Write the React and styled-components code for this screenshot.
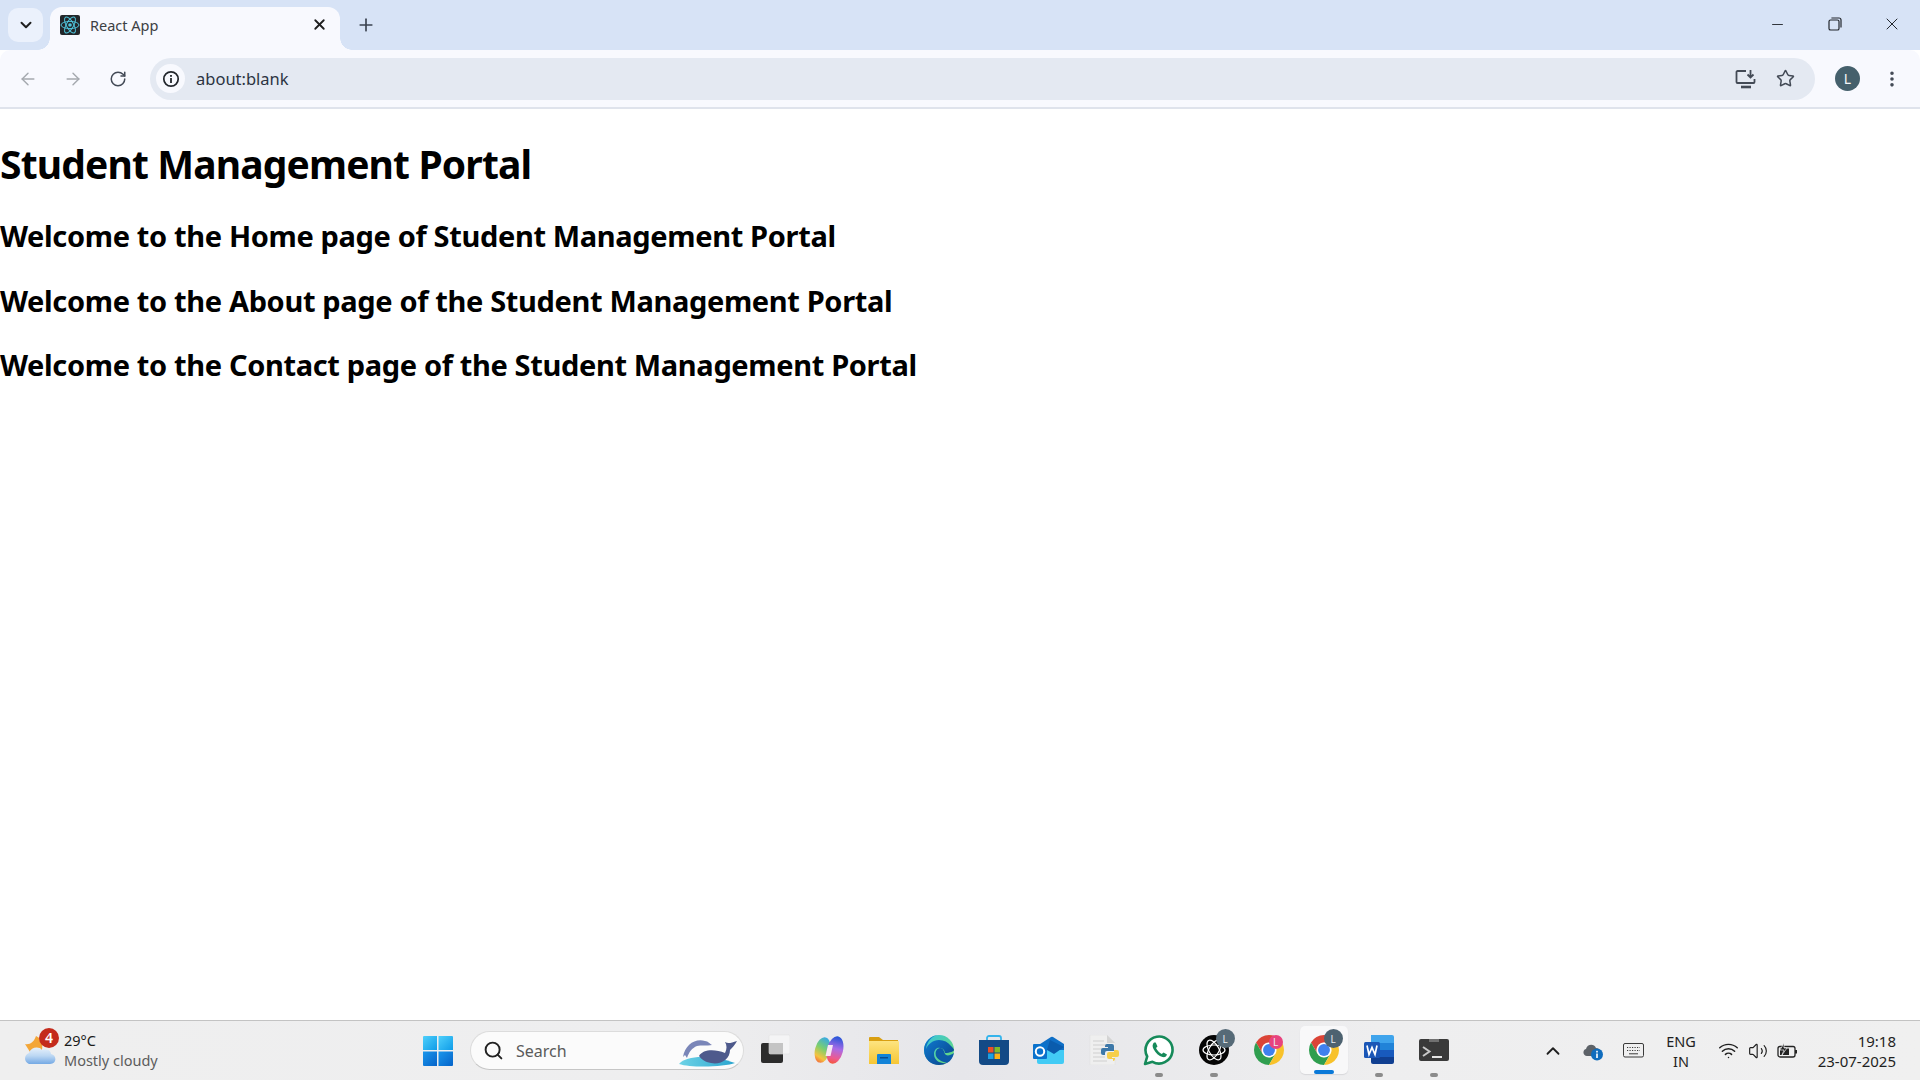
import React from "react";
import styled, { createGlobalStyle } from "styled-components";
import { ArrowLeft, ArrowRight, RotateCw, ChevronDown, ChevronUp, X, Plus, Minus, Star, EllipsisVertical, Search as SearchGlyph, Wifi, Volume2 } from "lucide-react";

const Global = createGlobalStyle`
  html, body { margin: 0; padding: 0; background: #fff; }
  body { font-family: "Noto Sans", "Open Sans", sans-serif; overflow: hidden; }
`;

const Screen = styled.div`
  width: 1920px; height: 1080px; display: flex; flex-direction: column; background: #fff;
`;
const TabStrip = styled.div`
  height: 50px; background: #d7e3f6; display: flex; align-items: flex-end; padding-left: 8px; flex: none;
`;
const TabListButton = styled.div`
  width: 35px; height: 34px; margin-bottom: 8px; border-radius: 10px; background: #ebf1fc; color: #1f1f1f;
  display: flex; align-items: center; justify-content: center;
`;
const Tab = styled.div`
  position: relative; width: 290px; height: 43px; margin-left: 7px; background: #f8f9fe;
  border-radius: 12px 12px 0 0; display: flex; align-items: center; padding: 0 10px 8px 10px; box-sizing: border-box;
  font-size: 14.5px; color: #3c4043;
  &::before, &::after {
    content: ""; position: absolute; bottom: 0; width: 12px; height: 12px;
  }
  &::before { left: -12px; background: radial-gradient(circle at 0 0, transparent 11.5px, #f8f9fe 12px); }
  &::after { right: -12px; background: radial-gradient(circle at 100% 0, transparent 11.5px, #f8f9fe 12px); }
`;
const TabTitle = styled.span`
  margin-left: 10px; flex: 1; white-space: nowrap;
`;
const CloseTab = styled.span`
  display: flex; color: #1f1f1f; margin-right: 2px;
`;
const NewTab = styled.div`
  display: flex; margin: 0 0 11px 12px; height: 28px; width: 28px; align-items: center; justify-content: center; color: #3b4350;
`;
const WindowControls = styled.div`
  margin-left: auto; display: flex; height: 50px; align-items: center; padding-bottom: 2px; box-sizing: border-box; color: #22262c;
`;
const WindowButton = styled.div`
  width: 57px; display: flex; justify-content: center; align-items: center;
`;
const Toolbar = styled.div`
  height: 57px; background: #f8f9fe; border-bottom: 2px solid #dfe3ec; border-radius: 10px 10px 0 0;
  display: flex; align-items: center; flex: none; box-sizing: content-box; color: #434a56;
`;
const NavButton = styled.div`
  width: 45px; display: flex; justify-content: center; align-items: center; color: ${p => (p.$off ? "#a5a9af" : "#434a56")};
`;
const NavGroup = styled.div`
  display: flex; padding-left: 5px; width: 150px; box-sizing: border-box; flex: none;
`;
const Omnibox = styled.div`
  width: 1665px; height: 42px; background: #e4e9f2; border-radius: 21px; display: flex; align-items: center;
  padding: 0 20px 0 6px; box-sizing: border-box; font-size: 16.5px; color: #2c3442; flex: none;
`;
const InfoChip = styled.div`
  width: 29px; height: 29px; border-radius: 50%; background: #f8f9fe; display: flex; align-items: center; justify-content: center; color: #22262c;
`;
const Url = styled.span`
  margin-left: 11px; flex: 1;
`;
const OmniActions = styled.div`
  display: flex; gap: 19px; align-items: center; color: #434a56;
`;
const ProfileArea = styled.div`
  flex: 1; display: flex; align-items: center; padding-left: 20px;
`;
const Avatar = styled.div`
  width: 25px; height: 25px; border-radius: 50%; background: #45606c; color: #f4f6f8; font-size: 14px;
  display: flex; align-items: center; justify-content: center;
`;
const Kebab = styled.div`
  display: flex; margin-left: 22px; color: #434a56;
`;
const Page = styled.main`
  flex: 1; overflow: hidden; color: #000; font-family: "Noto Sans", sans-serif;
`;
const Title = styled.h1`
  margin: 28px 0 0; font-size: 39px; line-height: 54px; font-weight: 700; letter-spacing: -0.85px;
`;
const Heading = styled.h2`
  margin: 25px 0 0; font-size: 29px; line-height: 39.5px; font-weight: 700; letter-spacing: -0.35px;
`;
const Taskbar = styled.footer`
  height: 60px; flex: none; box-sizing: border-box; border-top: 1px solid #c3c3c3;
  background: linear-gradient(90deg, #efefef 0%, #eeeeef 35%, #e6e6ea 50%, #eeeeef 72%, #f0f0f0 100%);
  display: flex; align-items: center; font-family: "Noto Sans", sans-serif;
`;
const Weather = styled.div`
  width: 423px; flex: none; display: flex; align-items: center; padding-left: 24px; box-sizing: border-box;
`;
const WeatherIcon = styled.div`
  position: relative; width: 36px; height: 36px; display: flex; flex: none;
`;
const Badge = styled.span`
  position: absolute; top: -5px; right: 1px; width: 20px; height: 20px; border-radius: 50%; background: #c42b1c; color: #fff;
  font-size: 14px; font-weight: 600; display: flex; align-items: center; justify-content: center; line-height: 1;
`;
const WeatherText = styled.div`
  margin: -2px 0 0 4px; font-size: 14.5px; line-height: 20px; color: #1b1b1b;
`;
const Muted = styled.div`
  color: #5c5c5c;
`;
const Start = styled.div`
  width: 30px; height: 30px; flex: none; display: flex;
`;
const SearchBox = styled.div`
  margin-left: 17px; width: 274px; height: 39px; box-sizing: border-box; border-radius: 20px; background: #fbfbfb;
  border: 1px solid #dcdcdc; border-bottom-color: #c6c6c6; display: flex; align-items: center; padding-left: 12px; flex: none;
  font-size: 16px; color: #5a5a5a; position: relative;
`;
const SearchLabel = styled.span`
  margin-left: 12px; flex: 1;
`;
const Dolphins = styled.div`
  display: flex; margin-right: 4px;
`;
const Apps = styled.div`
  display: flex; margin-left: 2px; height: 100%;
`;
const AppSlot = styled.div`
  position: relative; width: 55px; height: 100%; display: flex; align-items: center; justify-content: center; box-sizing: border-box; padding-bottom: 2px;
  ${p => p.$active && `
    background: #f8f8f9; border-radius: 5px; height: 48px; width: 48px; margin: 5px 3.5px; box-shadow: 0 1px 1px #d7d7da; padding-bottom: 0;
  `}
`;
const RunDot = styled.span`
  position: absolute; bottom: ${p => (p.$active ? "0" : "3px")}; left: 50%; transform: translateX(-50%);
  height: 4px; border-radius: 2px; width: ${p => (p.$active ? "20px" : "8px")}; background: ${p => (p.$active ? "#0a79d8" : "#8b8b8b")};
`;
const ProfileBadge = styled.span`
  position: absolute; top: ${p => p.$top}px; left: calc(50% + ${p => p.$dx}px); width: ${p => p.$size}px; height: ${p => p.$size}px; border-radius: 50%;
  background: ${p => p.$bg}; color: #e8edf0; font-size: 10px; display: flex; align-items: center; justify-content: center;
`;
const Tray = styled.div`
  margin-left: auto; display: flex; align-items: center; color: #1f1f1f; height: 100%;
`;
const TrayIcon = styled.div`
  display: flex; align-items: center; justify-content: center; width: ${p => p.$w || 40}px;
`;
const Lang = styled.div`
  width: 46px; margin: 0 9px 0 5px; text-align: center; font-size: 14.500px; line-height: 20px; color: #1f1f1f;
`;
const Clock = styled.div`
  width: 93px; margin-right: 24px; text-align: right; font-size: 15px; line-height: 20px; color: #1f1f1f; white-space: nowrap;
`;

const ReactFavicon = () => (
  <svg width="20" height="20" viewBox="0 0 20 20">
    <rect width="20" height="20" rx="2" fill="#23272a" />
    <g fill="none" stroke="#4fc3d9" strokeWidth="1">
      <ellipse cx="10" cy="10" rx="9" ry="3.6" />
      <ellipse cx="10" cy="10" rx="9" ry="3.6" transform="rotate(60 10 10)" />
      <ellipse cx="10" cy="10" rx="9" ry="3.6" transform="rotate(120 10 10)" />
    </g>
    <circle cx="10" cy="10" r="1.8" fill="#4fc3d9" />
  </svg>
);
const InfoIcon = () => (
  <svg width="18" height="18" viewBox="0 0 18 18" fill="none">
    <circle cx="9" cy="9" r="7.2" stroke="currentColor" strokeWidth="1.7" />
    <rect x="8.1" y="8" width="1.8" height="5" fill="currentColor" />
    <rect x="8.1" y="5" width="1.8" height="1.8" fill="currentColor" />
  </svg>
);
const RestoreIcon = () => (
  <svg width="14" height="14" viewBox="0 0 14 14" fill="none" stroke="#22262c" strokeWidth="1.2">
    <rect x="1" y="3" width="10" height="10" rx="1.6" />
    <path d="M3.4 1h7.6A2 2 0 0 1 13 3v7.6" />
  </svg>
);
const InstallIcon = () => (
  <svg width="22" height="20" viewBox="0 0 22 20" fill="none" stroke="currentColor" strokeWidth="1.8">
    <path d="M11 2H2.500A1 1 0 0 0 1.500 3v10a1 1 0 0 0 1 1h16a1 1 0 0 0 1-1v-3" />
    <path d="M6 18h10" strokeWidth="2.600" />
    <path d="M15.500 1v7M12.500 5.500l3 3 3-3" />
  </svg>
);
const WeatherArt = () => (
  <svg width="36" height="36" viewBox="0 0 36 36">
    <defs>
      <linearGradient id="cloudGrad" x1="0" y1="0" x2="0" y2="1"><stop offset="0" stopColor="#e6f0fb" /><stop offset="0.5" stopColor="#bcd7f3" /><stop offset="1" stopColor="#74a9e4" /></linearGradient>
    </defs>
    <path d="M1 11 C6 12 10 9 12 3 C17 5 19 10 18 17 L6 19 Z" fill="#f3a638" />
    <path d="M7 31 C0 31 -1 22 5 20 C7 14 15 13 18 17 C23 15 27 18 27 21 C33 22 33 31 26 31 Z" fill="url(#cloudGrad)" />
  </svg>
);
const WinLogo = () => (
  <svg width="30" height="30" viewBox="0 0 30 30">
    <defs>
      <linearGradient id="winA" x1="0" y1="0" x2="1" y2="1"><stop offset="0" stopColor="#4fd0fb" /><stop offset="1" stopColor="#0f9ce8" /></linearGradient>
      <linearGradient id="winB" x1="0" y1="0" x2="1" y2="1"><stop offset="0" stopColor="#1a97ec" /><stop offset="1" stopColor="#0563c9" /></linearGradient>
    </defs>
    <path d="M1 0H14V14H0V1a1 1 0 0 1 1-1z" fill="url(#winA)" />
    <path d="M15.500 0H29a1 1 0 0 1 1 1V14H15.500z" fill="url(#winA)" />
    <path d="M0 15.500H14V30H1a1 1 0 0 1-1-1z" fill="url(#winB)" />
    <path d="M15.500 15.500H30V29a1 1 0 0 1-1 1H15.500z" fill="url(#winB)" />
  </svg>
);
const DolphinArt = () => (
  <svg width="62" height="32" viewBox="0 0 62 32">
    <defs>
      <linearGradient id="seaGrad" x1="0" y1="0" x2="1" y2="0"><stop offset="0" stopColor="#6ed3e6" /><stop offset="1" stopColor="#2ba5cf" /></linearGradient>
    </defs>
    <path d="M2 29 C10 20 34 20 58 28 C48 32 14 33 2 29z" fill="url(#seaGrad)" />
    <path d="M6 22 C8 10 18 3 28 6 C31 6 33 9 35 10 C30 11 24 10 20 11 C15 13 12 17 10 23 L8 20z" fill="#7a86b8" />
    <path d="M22 21 C26 14 38 14 48 18 C50 14 50 10 48 7 C51 9 54 8 60 6 C58 10 55 13 53 15 C53 24 44 30 34 28 C28 27 24 24 22 21z" fill="#4e5a8c" />
  </svg>
);
const TaskViewIcon = () => (
  <svg width="32" height="32" viewBox="0 0 32 32">
    <rect x="3" y="9" width="22" height="20" rx="2" fill="#2c2c2c" />
    <rect x="11" y="1" width="21" height="19" rx="1.500" fill="#f6f6f6" fillOpacity="0.85" stroke="#e3e3e3" strokeWidth="0.600" />
    <rect x="11" y="9" width="14" height="11" fill="#c4c4c4" />
  </svg>
);
const CopilotIcon = () => (
  <svg width="32" height="30" viewBox="0 0 32 30">
    <defs>
      <linearGradient id="copA" x1="0.6" y1="0" x2="0.4" y2="1"><stop offset="0" stopColor="#35a8e8" /><stop offset="0.45" stopColor="#7ccf6e" /><stop offset="0.8" stopColor="#f6c340" /><stop offset="1" stopColor="#f2703c" /></linearGradient>
      <linearGradient id="copB" x1="0.5" y1="0" x2="0.5" y2="1"><stop offset="0" stopColor="#1f55d8" /><stop offset="0.45" stopColor="#a96be6" /><stop offset="0.8" stopColor="#ee5a8e" /><stop offset="1" stopColor="#f4573a" /></linearGradient>
    </defs>
    <ellipse cx="9.500" cy="15" rx="7.500" ry="13" transform="rotate(14 9.500 15)" fill="url(#copA)" />
    <ellipse cx="22" cy="15" rx="8" ry="14" transform="rotate(14 22 15)" fill="url(#copB)" />
    <path d="M15 10 L20 10 L17.500 21 L12.500 21 Z" fill="#f7e9f2" />
  </svg>
);
const FolderIcon = () => (
  <svg width="30" height="28" viewBox="0 0 30 28">
    <defs><linearGradient id="fold" x1="0" y1="0" x2="0" y2="1"><stop offset="0" stopColor="#fde481" /><stop offset="1" stopColor="#f6c634" /></linearGradient></defs>
    <path d="M0 2a1 1 0 0 1 1-1h9l4 3h15v6H0z" fill="#d99f12" />
    <path d="M0 5h29a1 1 0 0 1 1 1v22H0z" fill="url(#fold)" />
    <path d="M8 19a1 1 0 0 1 1-1h12a1 1 0 0 1 1 1v9H8z" fill="#1283d8" />
    <rect x="11" y="21" width="8" height="1.500" fill="#0b4d90" />
  </svg>
);
const EdgeIcon = () => (
  <svg width="30" height="30" viewBox="0 0 30 30">
    <defs>
      <linearGradient id="edA" x1="0" y1="0" x2="1" y2="1"><stop offset="0" stopColor="#36c4e0" /><stop offset="1" stopColor="#6fdc6b" /></linearGradient>
      <linearGradient id="edB" x1="0" y1="0" x2="1" y2="1"><stop offset="0" stopColor="#0f7fd6" /><stop offset="1" stopColor="#0a3f86" /></linearGradient>
    </defs>
    <circle cx="15" cy="15" r="15" fill="url(#edA)" />
    <path d="M15 0 C7 0 0 7 0 15 C0 24 7 30 15 30 C18 30 21 29 23 28 C17 29 10 26 10 19 C10 15 13 12 16 13 C19 13 21 16 21 18 C26 18 30 16 30 15 C30 14 29 13 27 11 C24 7 20 5 15 5 C9 5 4 9 2 14 C3 6 9 0 15 0z" fill="url(#edB)" />
    <path d="M16 13 C12 14 11 17 12 21 C14 25 19 27 23 28 C27 26 29 22 30 18 C26 21 22 21 21 19 C20 16 19 13 16 13z" fill="#0c59a8" />
  </svg>
);
const StoreIcon = () => (
  <svg width="30" height="30" viewBox="0 0 30 30">
    <path d="M8 6V3a2 2 0 0 1 2-2h10a2 2 0 0 1 2 2v3" fill="none" stroke="#35b4ec" strokeWidth="1.800" />
    <path d="M0 5h30v21a4 4 0 0 1-4 4H4a4 4 0 0 1-4-4z" fill="#134a86" />
    <rect x="9" y="12" width="5.500" height="5.500" fill="#ec4f26" />
    <rect x="15.500" y="12" width="5.500" height="5.500" fill="#7fba2a" />
    <rect x="9" y="18.500" width="5.500" height="5.500" fill="#1ba0e2" />
    <rect x="15.500" y="18.500" width="5.500" height="5.500" fill="#fbb117" />
  </svg>
);
const OutlookIcon = () => (
  <svg width="32" height="28" viewBox="0 0 32 28">
    <path d="M4 10 L18 1 a2 2 0 0 1 2 0 L31 8 V14 H4z" fill="#0f6fc6" />
    <path d="M4 14 H31 V26 a2 2 0 0 1-2 2 H6 a2 2 0 0 1-2-2z" fill="#42cbf5" />
    <path d="M17 4 L31 11 L21 18 L14 14z" fill="#0a5cad" />
    <rect x="0" y="8" width="14" height="15" rx="1" fill="#0a72cc" />
    <circle cx="7" cy="15.500" r="4.200" fill="none" stroke="#fff" strokeWidth="2" />
  </svg>
);
const PythonFileIcon = () => (
  <svg width="30" height="30" viewBox="0 0 30 30">
    <path d="M1 0h17l8 8v22H1z" fill="#efefef" stroke="#dedede" strokeWidth="0.500" />
    <path d="M18 0v8h8z" fill="#d4d4d4" />
    <g stroke="#cfcfcf" strokeWidth="1">
      <path d="M4 6h11M4 10h18M4 14h10M4 18h9M4 22h12M4 26h14" />
    </g>
    <path d="M18 9h5a2 2 0 0 1 2 2v5h-7a2 2 0 0 0-2 2v2h-2a2 2 0 0 1-2-2v-3a2 2 0 0 1 2-2h5v-1h-3v-1a2 2 0 0 1 2-2z" fill="#3d78a9" />
    <path d="M24 24h-4a2 2 0 0 1-2-2v-3a2 2 0 0 1 2-2h5v-2h3a2 2 0 0 1 2 2v3a2 2 0 0 1-2 2h-5v1h3v1a2 2 0 0 1-2 2z" fill="#f6cf4a" />
  </svg>
);
const WhatsappIcon = () => (
  <svg width="32" height="32" viewBox="0 0 32 32" fill="none">
    <path d="M2 30 L4.200 22.500 A13.500 13.500 0 1 1 9.500 27.800 Z" fill="#fff" stroke="#168a5a" strokeWidth="2.600" strokeLinejoin="round" />
    <path d="M11 8.500 C9.500 10 9 12 10.500 15 C12.500 19 16 22 19.500 23 C22 23.500 23.500 22.500 24 20.500 L20.500 18.500 L18.800 20 C16.500 19 14 16.500 13 14 L14.500 12.500 L12.700 8.500 Z" fill="#168a5a" />
  </svg>
);
const ChatGptIcon = () => (
  <svg width="30" height="30" viewBox="0 0 30 30" fill="none">
    <circle cx="15" cy="15" r="15" fill="#050505" />
    <g stroke="#fff" strokeWidth="1.200">
      <ellipse cx="15" cy="15" rx="11" ry="5" />
      <ellipse cx="15" cy="15" rx="11" ry="5" transform="rotate(60 15 15)" />
      <ellipse cx="15" cy="15" rx="11" ry="5" transform="rotate(120 15 15)" />
    </g>
  </svg>
);
const ChromeIcon = ({ size = 30 }) => (
  <svg width={size} height={size} viewBox="0 0 48 48">
    <path d="M24 12H44.780A24 24 0 0 0 3.220 12L13.600 30A12 12 0 0 1 24 12Z" fill="#db4437" />
    <path d="M3.220 12A24 24 0 0 0 24 48L34.400 30A12 12 0 0 1 13.600 30Z" fill="#2f9e4f" />
    <path d="M44.780 12H24A12 12 0 0 1 34.400 30L24 48A24 24 0 0 0 44.780 12Z" fill="#f8c22b" />
    <circle cx="24" cy="24" r="11.500" fill="#fff" />
    <circle cx="24" cy="24" r="9.500" fill="#3f80ee" />
  </svg>
);
const WordIcon = () => (
  <svg width="30" height="30" viewBox="0 0 30 30">
    <path d="M7 0H28a2 2 0 0 1 2 2V8H7z" fill="#3fa4ec" />
    <rect x="7" y="8" width="23" height="7" fill="#2183d8" />
    <rect x="7" y="15" width="23" height="7" fill="#185abd" />
    <path d="M7 22H30V27a2 2 0 0 1-2 2H9a2 2 0 0 1-2-2z" fill="#103f91" />
    <rect x="0" y="7" width="16" height="16" rx="1.500" fill="#1a56b6" />
    <path d="M3 10.500 L5 19.500 L8 12.500 L11 19.500 L13 10.500" fill="none" stroke="#fff" strokeWidth="1.700" />
  </svg>
);
const TerminalIcon = () => (
  <svg width="30" height="22" viewBox="0 0 30 22">
    <rect width="30" height="22" rx="2" fill="#3a3a3a" />
    <path d="M10 0h10v3H10z" fill="#707070" />
    <path d="M4 8 L10.500 12.500 L4 17" fill="none" stroke="#c9c9c9" strokeWidth="2" />
    <path d="M13 18h10" stroke="#e4e4e4" strokeWidth="2" />
  </svg>
);
const CloudInfo = () => (
  <svg width="22" height="22" viewBox="0 0 22 22">
    <path d="M5 16 C1 16 0 10 4 9 C5 4 12 3 14 8 C17 8 19 11 18 14 L12 16 Z" fill="#5d6268" />
    <circle cx="15" cy="14.500" r="6" fill="#0f6cbd" />
    <rect x="14.200" y="13.500" width="1.600" height="4.500" fill="#fff" />
    <rect x="14.200" y="10.800" width="1.600" height="1.700" fill="#fff" />
  </svg>
);
const KeyboardIcon = () => (
  <svg width="21" height="15" viewBox="0 0 21 15" fill="none" stroke="#3a3a3a">
    <rect x="0.500" y="0.500" width="20" height="13.500" rx="1.500" />
    <path d="M4 4.500h13M4 7.500h13" strokeDasharray="1.200 1.300" />
    <path d="M6 10.800h9" />
  </svg>
);
const BatteryIcon = () => (
  <svg width="22" height="16" viewBox="0 0 22 16" fill="none">
    <rect x="1" y="3.500" width="17" height="10.500" rx="2" stroke="#222" strokeWidth="1.300" />
    <rect x="3" y="5.500" width="9" height="6.500" fill="#222" />
    <path d="M19 7v3.500" stroke="#222" strokeWidth="2" />
    <path d="M7 0 L3 7 H7 L5 12 L10 5 H7 Z" fill="#222" stroke="#f0f1f2" strokeWidth="0.700" />
  </svg>
);

const apps = [
  { key: "view", icon: <TaskViewIcon /> },
  { key: "copilot", icon: <CopilotIcon /> },
  { key: "folder", icon: <FolderIcon /> },
  { key: "edge", icon: <EdgeIcon /> },
  { key: "store", icon: <StoreIcon /> },
  { key: "outlook", icon: <OutlookIcon /> },
  { key: "python", icon: <PythonFileIcon /> },
  { key: "whatsapp", icon: <WhatsappIcon />, running: true },
  { key: "chatgpt", icon: <ChatGptIcon />, running: true, badge: { bg: "#566a77", size: 19, top: 8, dx: 2, text: "L" } },
  { key: "chrome2", icon: <ChromeIcon />, badge: { bg: "#e8437e", size: 14, top: 14, dx: 0, text: "L" } },
  { key: "chrome", icon: <ChromeIcon />, running: true, active: true, badge: { bg: "#4d6270", size: 19, top: 3, dx: 0, text: "L" } },
  { key: "word", icon: <WordIcon />, running: true },
  { key: "terminal", icon: <TerminalIcon />, running: true },
];

export default function App() {
  return (
    <Screen>
      <Global />
      <TabStrip>
        <TabListButton><ChevronDown size={18} strokeWidth={2.6} /></TabListButton>
        <Tab>
          <ReactFavicon />
          <TabTitle>React App</TabTitle>
          <CloseTab><X size={17} strokeWidth={2.6} /></CloseTab>
        </Tab>
        <NewTab><Plus size={20} strokeWidth={2} /></NewTab>
        <WindowControls>
          <WindowButton><Minus size={17} strokeWidth={1.3} /></WindowButton>
          <WindowButton><RestoreIcon /></WindowButton>
          <WindowButton><X size={20} strokeWidth={1.2} /></WindowButton>
        </WindowControls>
      </TabStrip>
      <Toolbar>
        <NavGroup>
          <NavButton $off><ArrowLeft size={20} strokeWidth={1.7} /></NavButton>
          <NavButton $off><ArrowRight size={20} strokeWidth={1.7} /></NavButton>
          <NavButton><RotateCw size={18} strokeWidth={2} /></NavButton>
        </NavGroup>
        <Omnibox>
          <InfoChip><InfoIcon /></InfoChip>
          <Url>about:blank</Url>
          <OmniActions>
            <InstallIcon />
            <Star size={19} strokeWidth={1.9} />
          </OmniActions>
        </Omnibox>
        <ProfileArea>
          <Avatar>L</Avatar>
          <Kebab><EllipsisVertical size={20} strokeWidth={2.3} /></Kebab>
        </ProfileArea>
      </Toolbar>
      <Page>
        <Title>Student Management Portal</Title>
        <Heading>Welcome to the Home page of Student Management Portal</Heading>
        <Heading>Welcome to the About page of the Student Management Portal</Heading>
        <Heading>Welcome to the Contact page of the Student Management Portal</Heading>
      </Page>
      <Taskbar>
        <Weather>
          <WeatherIcon><WeatherArt /><Badge>4</Badge></WeatherIcon>
          <WeatherText>29°C<Muted>Mostly cloudy</Muted></WeatherText>
        </Weather>
        <Start><WinLogo /></Start>
        <SearchBox>
          <SearchGlyph size={21} strokeWidth={2.2} color="#222" />
          <SearchLabel>Search</SearchLabel>
          <Dolphins><DolphinArt /></Dolphins>
        </SearchBox>
        <Apps>
          {apps.map(a => (
            <AppSlot key={a.key} $active={a.active}>
              {a.icon}
              {a.badge && <ProfileBadge $bg={a.badge.bg} $size={a.badge.size} $top={a.badge.top} $dx={a.badge.dx}>{a.badge.text}</ProfileBadge>}
              {a.running && <RunDot $active={a.active} />}
            </AppSlot>
          ))}
        </Apps>
        <Tray>
          <TrayIcon><ChevronUp size={22} strokeWidth={2} /></TrayIcon>
          <TrayIcon><CloudInfo /></TrayIcon>
          <TrayIcon><KeyboardIcon /></TrayIcon>
          <Lang>ENG<br />IN</Lang>
          <TrayIcon $w={30}><Wifi size={21} strokeWidth={1.7} /></TrayIcon>
          <TrayIcon $w={30}><Volume2 size={20} strokeWidth={1.4} /></TrayIcon>
          <TrayIcon $w={30}><BatteryIcon /></TrayIcon>
          <Clock>19:18<br />23-07-2025</Clock>
        </Tray>
      </Taskbar>
    </Screen>
  );
}
